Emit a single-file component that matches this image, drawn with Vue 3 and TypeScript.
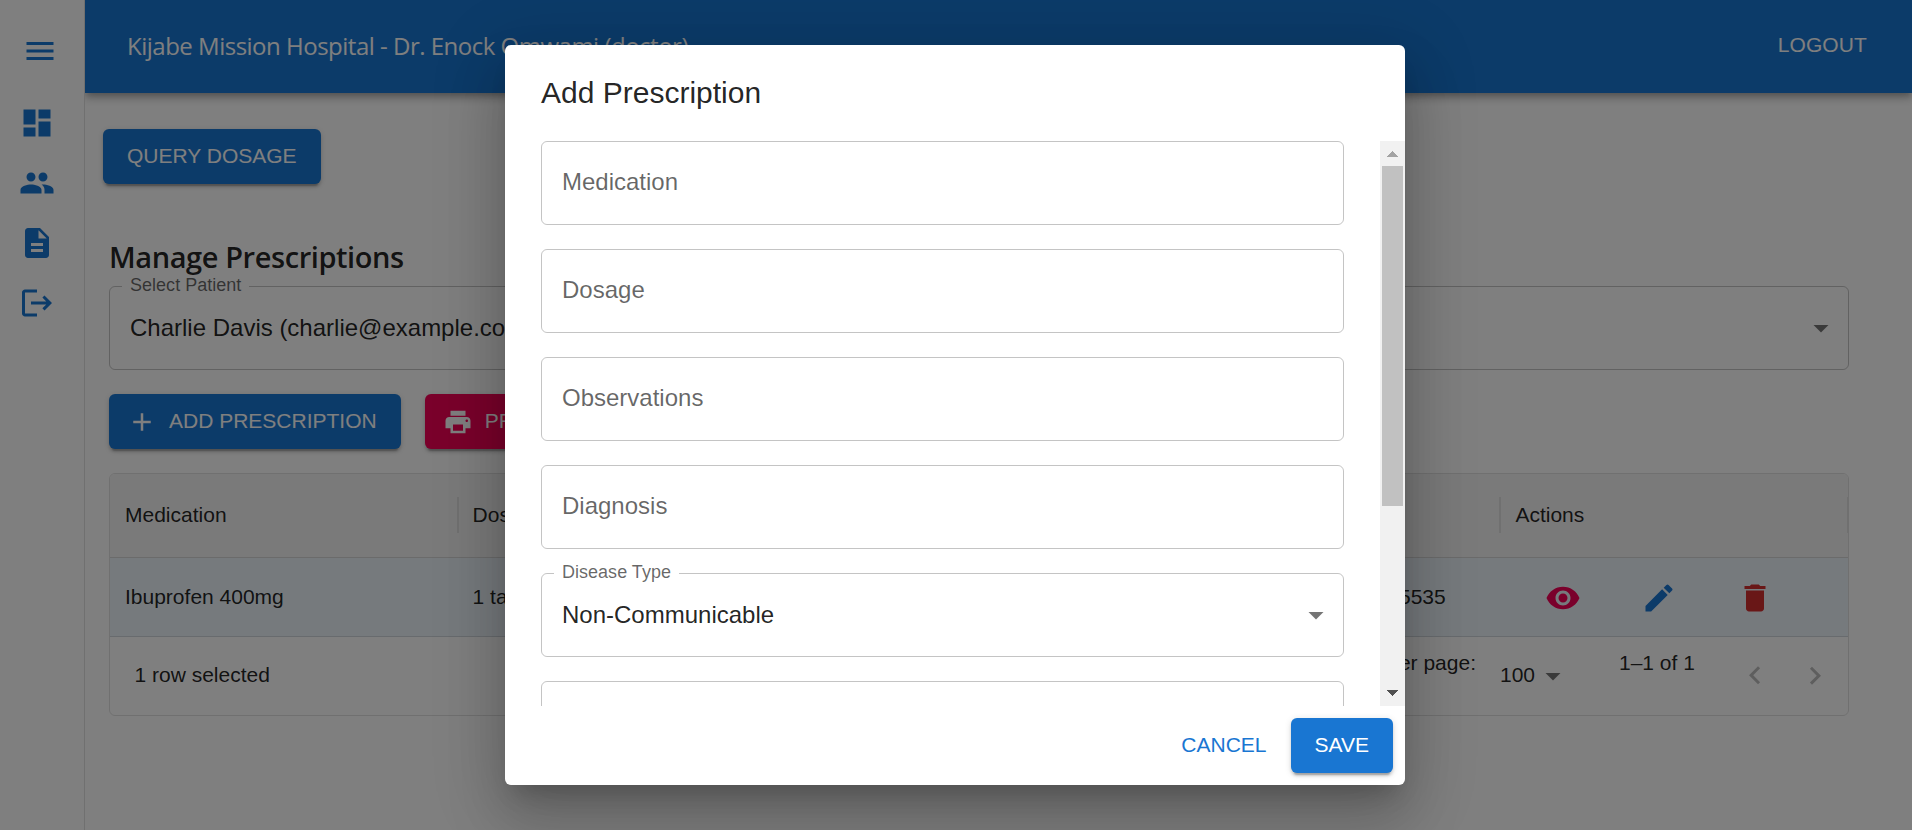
<script setup lang="ts">
interface NavItem {
  name: string
  path: string
}

interface Field {
  label: string
  value?: string
}

const navItems: NavItem[] = [
  { name: 'dashboard', path: 'M3 13h8V3H3v10zm0 8h8v-6H3v6zm10 0h8V11h-8v10zm0-18v6h8V3h-8z' },
  {
    name: 'patients',
    path: 'M16 11c1.66 0 2.99-1.34 2.99-3S17.66 5 16 5c-1.66 0-3 1.34-3 3s1.34 3 3 3zm-8 0c1.66 0 2.99-1.34 2.99-3S9.66 5 8 5C6.34 5 5 6.34 5 8s1.34 3 3 3zm0 2c-2.33 0-7 1.17-7 3.5V19h14v-2.5c0-2.33-4.67-3.5-7-3.5zm8 0c-.29 0-.62.02-.97.05 1.16.84 1.97 1.97 1.97 3.45V19h6v-2.5c0-2.33-4.67-3.5-7-3.5z',
  },
  {
    name: 'documents',
    path: 'M14 2H6c-1.1 0-1.99.9-1.99 2L4 20c0 1.1.89 2 1.99 2H18c1.1 0 2-.9 2-2V8l-6-6zm2 16H8v-2h8v2zm0-4H8v-2h8v2zm-3-5V3.5L18.5 9H13z',
  },
  {
    name: 'logout',
    path: 'm17 7-1.41 1.41L18.17 11H8v2h10.17l-2.58 2.58L17 17l5-5zM4 5h8V3H4c-1.1 0-2 .9-2 2v14c0 1.1.9 2 2 2h8v-2H4V5z',
  },
]

const columns: string[] = ['Medication', 'Dosage', 'Observations', 'Date', 'Actions']
const row: string[] = ['Ibuprofen 400mg', '1 tablet', 'Stable', '2024-10-15T12:09:45.785535']

const rowActions = [
  {
    name: 'view',
    path: 'M12 4.5C7 4.5 2.73 7.61 1 12c1.73 4.39 6 7.5 11 7.5s9.27-3.11 11-7.5c-1.73-4.39-6-7.5-11-7.5zM12 17c-2.76 0-5-2.24-5-5s2.24-5 5-5 5 2.24 5 5-2.24 5-5 5zm0-8c-1.66 0-3 1.34-3 3s1.34 3 3 3 3-1.34 3-3-1.34-3-3-3z',
  },
  {
    name: 'edit',
    path: 'M3 17.25V21h3.75L17.81 9.94l-3.75-3.75L3 17.25zM20.71 7.04c.39-.39.39-1.02 0-1.41l-2.34-2.34a.9959.9959 0 0 0-1.41 0l-1.83 1.83 3.75 3.75 1.83-1.83z',
  },
  { name: 'delete', path: 'M6 19c0 1.1.9 2 2 2h8c1.1 0 2-.9 2-2V7H6v12zM19 4h-3.5l-1-1h-5l-1 1H5v2h14V4z' },
]

const fields: Field[] = [
  { label: 'Medication' },
  { label: 'Dosage' },
  { label: 'Observations' },
  { label: 'Diagnosis' },
  { label: 'Disease Type', value: 'Non-Communicable' },
  { label: '' },
]
</script>

<template>
  <div class="app">
    <nav class="sidebar">
      <div class="nav-btn menu">
        <svg class="icon" viewBox="0 0 24 24"><path d="M3 18h18v-2H3v2zm0-5h18v-2H3v2zm0-7v2h18V6H3z" /></svg>
      </div>
      <div v-for="item in navItems" :key="item.name" class="nav-btn">
        <svg class="icon" viewBox="0 0 24 24"><path :d="item.path" /></svg>
      </div>
    </nav>

    <div class="page">
      <header class="appbar">
        <div class="app-title">Kijabe Mission Hospital - Dr. Enock Omwami (doctor)</div>
        <button class="logout">LOGOUT</button>
      </header>

      <main class="content">
        <button class="btn primary query">QUERY DOSAGE</button>

        <section class="manage">
          <h2>Manage Prescriptions</h2>
          <div class="field select">
            <span class="float-label">Select Patient</span>
            <span class="value">Charlie Davis (charlie@example.com)</span>
            <svg class="icon caret" viewBox="0 0 24 24"><path d="m7 10 5 5 5-5z" /></svg>
          </div>

          <div class="toolbar">
            <button class="btn primary">
              <svg class="start-icon" viewBox="0 0 24 24"><path d="M19 13h-6v6h-2v-6H5v-2h6V5h2v6h6v2z" /></svg>
              ADD PRESCRIPTION
            </button>
            <button class="btn secondary">
              <svg class="start-icon" viewBox="0 0 24 24">
                <path d="M19 8H5c-1.66 0-3 1.34-3 3v6h4v4h12v-4h4v-6c0-1.66-1.34-3-3-3zm-3 11H8v-5h8v5zm3-7c-.55 0-1-.45-1-1s.45-1 1-1 1 .45 1 1-.45 1-1 1zm-1-9H6v4h12V3z" />
              </svg>
              PRINT
            </button>
          </div>

          <div class="grid">
            <div class="grid-row head">
              <div v-for="col in columns" :key="col" class="cell">
                {{ col }}<span class="sep"></span>
              </div>
            </div>
            <div class="grid-row body">
              <div v-for="cell in row" :key="cell" class="cell">{{ cell }}</div>
              <div class="cell">
                <span v-for="action in rowActions" :key="action.name" class="action" :class="action.name">
                  <svg class="icon" viewBox="0 0 24 24"><path :d="action.path" /></svg>
                </span>
              </div>
            </div>
            <div class="grid-foot">
              <span class="selected">1 row selected</span>
              <span class="raised per-page">Rows per page:</span>
              <span class="page-size">100</span>
              <svg class="icon size-caret" viewBox="0 0 24 24"><path d="m7 10 5 5 5-5z" /></svg>
              <span class="raised range">1–1 of 1</span>
              <svg class="icon chevron" viewBox="0 0 24 24"><path d="M15.41 16.09l-4.58-4.59 4.58-4.59L14 5.5l-6 6 6 6z" /></svg>
              <svg class="icon chevron" viewBox="0 0 24 24"><path d="M8.59 16.34l4.58-4.59-4.58-4.59L10 5.75l6 6-6 6z" /></svg>
            </div>
          </div>
        </section>
      </main>
    </div>

    <div class="backdrop">
      <div class="dialog">
        <div class="dialog-title">Add Prescription</div>
        <div class="dialog-body">
          <div class="form">
            <div v-for="field in fields" :key="field.label" class="field">
              <template v-if="field.value">
                <span class="float-label">{{ field.label }}</span>
                <span class="value">{{ field.value }}</span>
                <svg class="icon caret" viewBox="0 0 24 24"><path d="m7 10 5 5 5-5z" /></svg>
              </template>
              <span v-else class="placeholder">{{ field.label }}</span>
            </div>
          </div>
          <div class="scrollbar">
            <svg class="scroll-arrow up" viewBox="0 0 25 25"><path d="M7 16h11l-5.5-6z" /></svg>
            <div class="thumb"></div>
            <svg class="scroll-arrow down" viewBox="0 0 25 25"><path d="M7 9h11l-5.5 6z" /></svg>
          </div>
        </div>
        <div class="dialog-actions">
          <button class="text-btn">CANCEL</button>
          <button class="btn primary">SAVE</button>
        </div>
      </div>
    </div>
  </div>
</template>

<style>
body {
  margin: 0;
  overflow: hidden;
}
</style>

<style scoped>
.app {
  position: relative;
  display: flex;
  width: 100%;
  height: 830px;
  overflow: hidden;
  background: #fff;
  color: rgba(0, 0, 0, 0.87);
  font-family: 'Liberation Sans', Arial, sans-serif;
}

.app *,
.app *::before {
  box-sizing: border-box;
}

button {
  margin: 0;
  border: 0;
  font: inherit;
}

.icon {
  width: 36px;
  height: 36px;
  flex: none;
  fill: currentColor;
}

/* Sidebar */
.sidebar {
  z-index: 2;
  flex: none;
  width: 85px;
  background: #fff;
  border-right: 1px solid rgba(0, 0, 0, 0.12);
  color: #1976d2;
}

.nav-btn {
  display: flex;
  align-items: center;
  height: 60px;
  padding-left: 19px;
}

.nav-btn.menu {
  height: 93px;
  padding: 9px 0 0 22px;
}

/* App bar */
.page {
  flex: 1;
  min-width: 0;
}

.appbar {
  display: flex;
  justify-content: space-between;
  align-items: center;
  height: 93px;
  padding: 0 45px 0 42px;
  background: #1976d2;
  color: #fff;
  box-shadow: 0 3px 6px -1.5px rgba(0, 0, 0, 0.2), 0 6px 7.5px rgba(0, 0, 0, 0.14), 0 1.5px 15px rgba(0, 0, 0, 0.12);
}

.app-title {
  margin-top: -2px;
  font: 400 24px/36px 'Open Sans', 'Noto Sans', sans-serif;
  letter-spacing: -0.5px;
}

.logout {
  padding: 0;
  margin-top: -4px;
  background: none;
  color: inherit;
  font-size: 21px;
  line-height: 36px;
  letter-spacing: 0.1px;
}

.content {
  padding: 36px 63px 0 18px;
}

/* Buttons */
.btn {
  display: inline-flex;
  align-items: center;
  height: 55px;
  padding: 0 24px 2px;
  border-radius: 6px;
  color: #fff;
  font-size: 21px;
  letter-spacing: 0;
  white-space: nowrap;
  box-shadow: 0 4.5px 1.5px -3px rgba(0, 0, 0, 0.2), 0 3px 3px rgba(0, 0, 0, 0.14), 0 1.5px 7.5px rgba(0, 0, 0, 0.12);
}

.primary {
  background: #1976d2;
}

.secondary {
  background: #f50057;
}

.start-icon {
  width: 30px;
  height: 30px;
  margin: 2px 12px 0 -6px;
  fill: currentColor;
}

.query {
  display: flex;
}

.manage {
  margin: 49px 0 0 6px;
}

h2 {
  margin: 0;
  height: 53px;
  font: 600 29px/48px 'Open Sans', 'Noto Sans', sans-serif;
  letter-spacing: -0.42px;
  white-space: nowrap;
}

/* Outlined fields */
.field {
  position: relative;
  display: flex;
  align-items: center;
  flex: none;
  height: 84px;
  padding: 0 9px 0 20px;
  border: 1px solid rgba(0, 0, 0, 0.23);
  border-radius: 6px;
  font-size: 24px;
  line-height: 34px;
}

.float-label {
  position: absolute;
  top: -9px;
  left: 12px;
  padding: 0 8px;
  background: #fff;
  color: rgba(0, 0, 0, 0.6);
  font-size: 18px;
  line-height: 14px;
  letter-spacing: 0.02px;
}

.value {
  flex: 1;
}

.placeholder {
  margin-top: -2px;
  color: rgba(0, 0, 0, 0.6);
}

.caret {
  color: rgba(0, 0, 0, 0.54);
}

.toolbar {
  display: flex;
  gap: 24px;
  margin: 24px 0;
}

/* Prescriptions grid */
.grid {
  border: 1px solid rgba(0, 0, 0, 0.12);
  border-radius: 6px;
  overflow: hidden;
  font-size: 21px;
}

.grid-row {
  display: grid;
  grid-template-columns: repeat(5, 1fr);
  border-bottom: 1px solid rgba(0, 0, 0, 0.12);
}

.head {
  height: 84px;
  background: #f5f5f5;
}

.head .cell {
  padding-bottom: 2px;
}

.body {
  height: 79px;
  background: rgba(25, 118, 210, 0.08);
}

.cell {
  position: relative;
  display: flex;
  align-items: center;
  min-width: 0;
  padding-left: 15px;
  white-space: nowrap;
}

.sep {
  position: absolute;
  top: 23px;
  right: -1px;
  width: 2px;
  height: 36px;
  background: rgba(0, 0, 0, 0.08);
}

.action {
  display: flex;
  flex: none;
  justify-content: center;
  width: 96px;
  padding-top: 2px;
}

.view {
  color: #f50057;
}

.edit {
  color: #1976d2;
}

.delete {
  color: #d32f2f;
}

.grid-foot {
  display: flex;
  align-items: center;
  height: 78px;
  padding: 0 3px 2px 24.5px;
}

.raised {
  margin-bottom: 24px;
}

.per-page {
  margin-left: auto;
}

.page-size {
  width: 35px;
  margin-left: 24px;
}

.size-caret {
  margin: 2px 0 0;
  color: rgba(0, 0, 0, 0.54);
}

.range {
  width: 74px;
  margin: 0 32px 24px 48px;
  white-space: nowrap;
}

.chevron {
  margin: 2px 12px 0;
  color: rgba(0, 0, 0, 0.26);
}

/* Dialog */
.backdrop {
  position: absolute;
  z-index: 10;
  inset: 0;
  display: flex;
  align-items: center;
  justify-content: center;
  background: rgba(0, 0, 0, 0.5);
}

.dialog {
  display: flex;
  flex-direction: column;
  width: 900px;
  height: 740px;
  margin-right: 2px;
  border-radius: 6px;
  background: #fff;
  box-shadow: 0 16.5px 22.5px -10.5px rgba(0, 0, 0, 0.2), 0 36px 57px 4.5px rgba(0, 0, 0, 0.14), 0 13.5px 69px 12px rgba(0, 0, 0, 0.12);
}

.dialog-title {
  flex: none;
  height: 96px;
  padding: 24px 36px;
  font-size: 30px;
  line-height: 48px;
}

.dialog-body {
  display: flex;
  height: 565px;
  overflow: hidden;
}

.form {
  display: flex;
  flex: 1;
  flex-direction: column;
  gap: 24px;
  padding: 0 36px;
}

.scrollbar {
  display: flex;
  flex-direction: column;
  width: 25px;
  background: #f1f1f1;
}

.scroll-arrow {
  width: 25px;
  height: 25px;
  flex: none;
  shape-rendering: crispEdges;
}

.up {
  fill: #a3a3a3;
}

.down {
  margin-top: auto;
  fill: #505050;
}

.thumb {
  height: 340px;
  margin: 0 2px;
  background: #c1c1c1;
}

.dialog-actions {
  display: flex;
  align-items: center;
  justify-content: flex-end;
  gap: 12px;
  height: 79px;
  padding: 0 12px;
}

.text-btn {
  padding: 0 12px 2px;
  background: none;
  color: #1976d2;
  font-size: 21px;
}
</style>
